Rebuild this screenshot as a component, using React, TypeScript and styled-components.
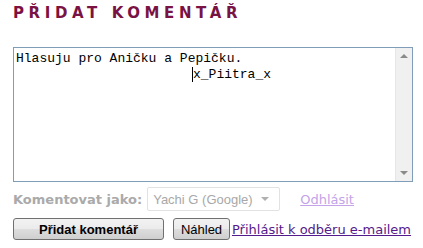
import React from "react";
import styled, { createGlobalStyle } from "styled-components";

const GlobalStyle = createGlobalStyle`
  html, body {
    margin: 0;
    padding: 0;
    background: #fff;
  }
`;

const Page = styled.div`
  width: 423px;
  height: 248px;
  padding: 5px 10px 0 13px;
  box-sizing: border-box;
  font-family: "DejaVu Sans", Verdana, sans-serif;
`;

const Title = styled.h4`
  margin: 0;
  height: 42px;
  font-size: 15px;
  font-weight: bold;
  letter-spacing: 4.6px;
  color: #7a1244;
  line-height: 17px;
`;

const Box = styled.div`
  display: flex;
  width: 400px;
  height: 135px;
  box-sizing: border-box;
  border: 1px solid #7f9db9;
`;

const Text = styled.div`
  flex: 1;
  padding: 3px 2px;
  font-family: "Liberation Mono", "Courier New", monospace;
  font-size: 13px;
  line-height: 16px;
  color: #000;
`;

const Line = styled.div<{ $indent?: number }>`
  padding-left: ${(p) => p.$indent || 0}px;
  white-space: pre;
`;

const Caret = styled.span`
  border-left: 1px solid #000;
`;

const Scroll = styled.div`
  width: 17px;
  background: #f0f0f0;
  border-left: 1px solid #e6e6e6;
  display: flex;
  flex-direction: column;
  justify-content: space-between;
  align-items: center;
  padding: 6px 0;
  box-sizing: border-box;
`;

const Arrow = styled.div<{ $down?: boolean }>`
  width: 0;
  height: 0;
  border-left: 4px solid transparent;
  border-right: 4px solid transparent;
  ${(p) =>
    p.$down
      ? "border-top: 4px solid #8a8a8a;"
      : "border-bottom: 4px solid #8a8a8a;"}
`;

const Row = styled.div`
  display: flex;
  align-items: center;
  height: 24px;
  margin-top: 5px;
`;

const Label = styled.span`
  font-weight: bold;
  font-size: 13px;
  color: #aaaaaa;
  margin-right: 5px;
`;

const Select = styled.div`
  display: flex;
  align-items: center;
  justify-content: space-between;
  width: 133px;
  height: 24px;
  box-sizing: border-box;
  border: 1px solid #e2e2e2;
  border-radius: 2px;
  padding: 0 10px 0 5px;
  font-family: "Liberation Sans", Arial, sans-serif;
  font-size: 13px;
  color: #a8a8a8;
`;

const SmallArrow = styled.span`
  width: 0;
  height: 0;
  border-left: 4px solid transparent;
  border-right: 4px solid transparent;
  border-top: 4px solid #b0b0b0;
`;

const Link = styled.a<{ $faded?: boolean }>`
  font-size: 13px;
  color: ${(p) => (p.$faded ? "#c4a3e8" : "#551a8b")};
  text-decoration: underline;
  margin-left: ${(p) => (p.$faded ? "20px" : "2px")};
`;

const Buttons = styled.div`
  display: flex;
  align-items: center;
  margin-top: 7px;
`;

const Button = styled.button<{ $width: number; $bold?: boolean }>`
  width: ${(p) => p.$width}px;
  height: 22px;
  padding: 0;
  margin-right: 9px;
  border: 1px solid #707070;
  border-radius: 3px;
  background: linear-gradient(#f2f2f2 0%, #ebebeb 50%, #dddddd 51%, #cfcfcf 100%);
  font-family: "Liberation Sans", Arial, sans-serif;
  font-size: 13px;
  font-weight: ${(p) => (p.$bold ? "bold" : "normal")};
  color: #000;
  &:last-of-type {
    margin-right: 0;
  }
`;

export default function App() {
  return (
    <Page>
      <GlobalStyle />
      <Title>PŘIDAT KOMENTÁŘ</Title>
      <Box>
        <Text>
          <Line>Hlasuju pro Aničku a Pepičku.</Line>
          <Line $indent={176}>
            <Caret>x_Piitra_x</Caret>
          </Line>
        </Text>
        <Scroll>
          <Arrow />
          <Arrow $down />
        </Scroll>
      </Box>
      <Row>
        <Label>Komentovat jako:</Label>
        <Select>
          Yachi G (Google)
          <SmallArrow />
        </Select>
        <Link $faded href="#">Odhlásit</Link>
      </Row>
      <Buttons>
        <Button $width={151} $bold>Přidat komentář</Button>
        <Button $width={57}>Náhled</Button>
        <Link href="#">Přihlásit k odběru e-mailem</Link>
      </Buttons>
    </Page>
  );
}
